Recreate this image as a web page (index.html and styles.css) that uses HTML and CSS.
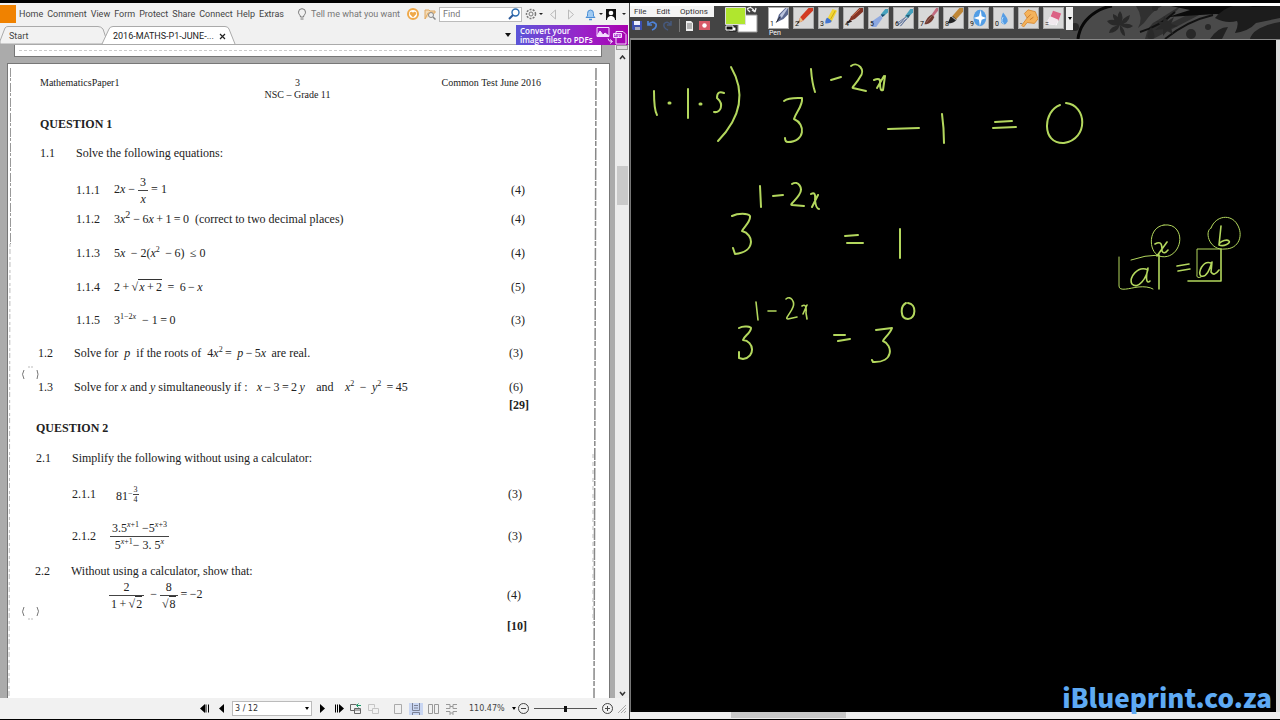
FILE: index.html
```
<!DOCTYPE html>
<html lang="en">
<head>
<meta charset="utf-8">
<title>Maths paper and whiteboard</title>
<link rel="stylesheet" href="styles.css">
</head>
<body>
<div class="screen">
  <section class="reader">
    <header class="reader-top">
      <div class="menu-row">
        <button class="file-btn" aria-label="File"></button>
        <nav class="menu">
          <button>Home</button><button>Comment</button><button>View</button><button>Form</button><button>Protect</button><button>Share</button><button>Connect</button><button>Help</button><button>Extras</button>
        </nav>
        <svg class="bulb" width="10" height="13" viewBox="0 0 10 13" fill="none" stroke="#777"><path d="M3.5 9C3.500 7 1.500 6.500 1.500 4.200A3.500 3.500 0 0 1 8.500 4.200C8.500 6.500 6.500 7 6.500 9ZM3.500 11h3"/></svg>
        <span class="tell">Tell me what you want</span>
        <svg class="heart" width="12" height="12" viewBox="0 0 12 12"><circle cx="6" cy="6" r="5" fill="#fff" stroke="#efa94a" stroke-width="2"/><path d="M6 9.500 3 6.300C2 4.500 4.500 2.800 6 4.700 7.500 2.800 10 4.500 9 6.300Z" fill="#efa94a"/></svg>
        <svg class="folder" width="12" height="12" viewBox="0 0 12 12"><path d="M1 11V2h4l1 1h5v2M1 11l3-6h7" fill="#f4dcb8" stroke="#e0a860"/><circle cx="7" cy="7" r="2.500" fill="#eee" stroke="#888"/><path d="m9 9 2.500 2.500" stroke="#888" stroke-width="1.500"/></svg>
        <div class="find"><input type="text" placeholder="Find" aria-label="Find"><svg width="12" height="12" viewBox="0 0 12 12"><circle cx="7.500" cy="4.500" r="3.500" fill="#fff" stroke="#2b6cb0" stroke-width="1.400"/><path d="M5 7 1 11" stroke="#2b5a9a" stroke-width="2"/></svg></div>
        <button class="ico gear" aria-label="Settings"><svg width="18" height="12" viewBox="0 0 18 12"><circle cx="6" cy="6" r="4.500" fill="none" stroke="#777" stroke-width="1.500" stroke-dasharray="2 1.200"/><circle cx="6" cy="6" r="2" fill="none" stroke="#777"/><path d="M14 5h4l-2 2z" fill="#222"/></svg></button>
        <button class="ico prev" aria-label="Back"><svg width="8" height="11" viewBox="0 0 8 11"><path d="M6.500 1v9l-5-4.500z" fill="none" stroke="#bbb"/></svg></button>
        <button class="ico fwd" aria-label="Forward"><svg width="8" height="11" viewBox="0 0 8 11"><path d="M1.500 1v9l5-4.500z" fill="none" stroke="#bbb"/></svg></button>
        <button class="ico bell" aria-label="Notifications"><svg width="18" height="13" viewBox="0 0 18 13"><path d="M1 9.500 2.500 8V5.500a3 3.500 0 0 1 6 0V8L10 9.500z" fill="#9fcaf2" stroke="#4a8fd6"/><path d="M4 11.500h3" stroke="#4a8fd6" stroke-width="1.500"/><path d="M14 5h4l-2 2z" fill="#222"/></svg></button>
        <button class="ico user" aria-label="Account"><svg width="20" height="11" viewBox="0 0 20 11"><path d="M0 0h10v11H0z" fill="#111"/><circle cx="5" cy="4" r="2.300" fill="#fff"/><path d="M1 11q0-3 3-4h2q3 1 3 4z" fill="#fff"/><path d="M16 4h4l-2 2z" fill="#222"/></svg></button>
      </div>
      <div class="tab-row">
        <svg class="tab-lines" viewBox="0 0 240 18" width="240" height="18" fill="#f2f2f2" stroke="#aaa"><path d="M0 15 5 2Q6 .5 8 .5H98Q101 .5 103 3L108 18H0z"/><path d="M102 18 109 3Q110 .5 113 .5H225Q228 .5 229 3L235 18" fill="#fff"/></svg>
        <button class="tab">Start</button>
        <button class="tab active">2016-MATHS-P1-JUNE-...</button>
        <button class="close" aria-label="Close tab"><svg width="7" height="7" viewBox="0 0 7 7"><path d="m1 1 5 5M6 1 1 6" stroke="#222" stroke-width="1.200"/></svg></button>
        <button class="ico more" aria-label="More tabs"><svg width="6" height="4" viewBox="0 0 6 4"><path d="M0 0h6L3 4z" fill="#111"/></svg></button>
        <a class="promo" href="#"><span>Convert your<br>image files to PDFs</span><svg width="32" height="20" viewBox="0 0 32 20" fill="none" stroke="#f3dcff"><path d="M1 2.500h12v9H1z"/><path d="m1 11 3-5 3 4 2-2 4 3z" fill="#f3dcff"/><path d="M22 6.500h5l3 3V19H20V6.500z"/><path d="M17.500 8.500h8v4h-8z" fill="#b23ad0"/><path d="M19 11V9.500h1v1M22 9.500v2h1v-2M25 12V9.500" stroke-width=".8"/><path d="M12 13.500q0 3 4 3m-2-2 2.500 2-2.500 2"/></svg></a>
      </div>
    </header>

    <div class="viewer">
      <div class="pages">
        <div class="sheet-prev"><i></i></div>
        <article class="sheet">
          <svg class="edge edge-l" width="4" height="634" viewBox="0 0 4 634" fill="none" stroke="#999"><path d="M2.500 4V180" stroke-dasharray="9 1 3 2"/><path d="M2 180 1 634" stroke="#bbb" stroke-dasharray="3 2 5 3"/></svg>
          <svg class="edge edge-r" width="6" height="634" viewBox="0 0 6 634" fill="none" stroke="#888"><path d="M4 4 2 634" stroke-width="1.500" stroke-dasharray="12 1 5 2"/><path d="M1 390V560" stroke="#bbb" stroke-dasharray="4 4"/></svg>
          <svg class="punch punch-a" width="20" height="16" viewBox="0 0 20 16" fill="none" stroke="#777"><path d="M3 4Q0 8 3 13M16 4q2 4 0 9"/><path d="M7 1h5" stroke="#bbb" stroke-dasharray="2 1"/></svg>
          <svg class="punch punch-b" width="20" height="16" viewBox="0 0 20 16" fill="none" stroke="#777"><path d="M3 3Q0 8 3 12M16 3q3 4 0 9"/><path d="M7 15h5" stroke="#bbb" stroke-dasharray="2 1"/></svg>
          <header class="paper-head"><span>MathematicsPaper1</span><span class="mid">3<br>NSC – Grade 11</span><span class="right">Common Test June 2016</span></header>

          <section class="part p1">
            <h2>QUESTION 1</h2>
            <div class="q h30"><b>1.1</b><span>Solve the following equations:</span></div>
            <div class="q sub h44"><b>1.1.1</b><span class="m">2<i>x</i> − <span class="frac"><span>3</span><span><i>x</i></span></span> = 1</span><em>(4)</em></div>
            <div class="q sub h14"><b>1.1.2</b><span class="m">3<i>x</i><sup class="big">2</sup> −&thinsp;6<i>x</i>&thinsp;+&thinsp;1&thinsp;=&thinsp;0 &nbsp;(correct to two decimal places)</span><em>(4)</em></div>
            <div class="q sub h54"><b>1.1.3</b><span class="m">5<i>x</i> &thinsp;− 2(<i>x</i><sup>2</sup>&thinsp; −&thinsp;6) &thinsp;≤ 0</span><em>(4)</em></div>
            <div class="q sub h14"><b>1.1.4</b><span class="m">2&thinsp;+&thinsp;<span class="root">√<span><i>x</i>&thinsp;+&thinsp;2</span></span>&thinsp; =&thinsp; 6&thinsp;−&thinsp;<i>x</i></span><em>(5)</em></div>
            <div class="q sub h52"><b>1.1.5</b><span class="m">3<sup>1−2<i>x</i></sup> &nbsp;− 1&thinsp;=&thinsp;0</span><em>(3)</em></div>
          </section>
          <section class="part p2">
            <div class="q h14"><b>1.2</b><span>Solve for &nbsp;<i>p</i> &nbsp;if the roots of &nbsp;4<i>x</i><sup>2</sup>&thinsp;=&thinsp; <i>p</i>&thinsp;−&thinsp;5<i>x</i>&thinsp; are real.</span><em>(3)</em></div>
            <div class="q h18 gap-above"><b>1.3</b><span>Solve for <i>x</i> and <i>y</i> simultaneously if : &nbsp; <i>x</i>&thinsp;−&thinsp;3&thinsp;=&thinsp;2&thinsp;<i>y</i> &nbsp;&thinsp; and &nbsp;&thinsp; <i>x</i><sup>2</sup>&thinsp; −&thinsp; <i>y</i><sup>2</sup>&thinsp; =&thinsp;45</span><em>(6)</em></div>
            <div class="q h18 total"><strong>[29]</strong></div>
          </section>
          <section class="part p3">
            <h2>QUESTION 2</h2>
            <div class="q h32"><b>2.1</b><span>Simplify the following without using a calculator:</span></div>
            <div class="q sub h40"><b>2.1.1</b><span class="m">&nbsp; 81<span class="pow">−<span class="frac tiny"><span>3</span><span>4</span></span></span></span><em>(3)</em></div>
            <div class="q sub h44"><b>2.1.2</b><span class="m"><span class="frac"><span>3.5<sup><i>x</i>+1</sup> −5<sup><i>x</i>+3</sup></span><span>5<sup><i>x</i>+1</sup>− 3. 5<sup><i>x</i></sup></span></span></span><em>(3)</em></div>
          </section>
          <section class="part p4">
            <div class="q h18"><b>2.2</b><span>Without using a calculator, show that:</span></div>
            <div class="q sub h30"><b></b><span class="m"><span class="frac"><span>2</span><span>1&thinsp;+&thinsp;<span class="root">√<span>2</span></span></span></span> &nbsp;− <span class="frac"><span>8</span><span><span class="root">√<span>8</span></span></span></span> =&thinsp;−2</span><em>(4)</em></div>
            <div class="q h32 total"><strong>[10]</strong></div>
          </section>
        </article>
      </div>
      <div class="vscroll"><i class="split"></i><svg width="7" height="5" viewBox="0 0 7 5"><path d="m1 4 2.500-3L6 4" fill="none" stroke="#333" stroke-width="1.500"/></svg><i class="thumb"></i><svg width="7" height="5" viewBox="0 0 7 5"><path d="m1 1 2.500 3L6 1" fill="none" stroke="#333" stroke-width="1.500"/></svg></div>
    </div>

    <footer class="status">
      <button aria-label="First page"><svg width="10" height="9" viewBox="0 0 10 9"><path d="M5 0v9L0 4.500zM5.500 .5h1v8h-1zM8 .5h1v8H8z"/></svg></button>
      <button class="s1" aria-label="Previous page"><svg width="6" height="9" viewBox="0 0 6 9"><path d="M5 0v9L0 4.500z"/></svg></button>
      <span class="page-box"><select aria-label="Page"><option>3 / 12</option></select><svg width="4" height="3" viewBox="0 0 4 3"><path d="M0 0h4L2 3z"/></svg></span>
      <button aria-label="Next page"><svg width="6" height="9" viewBox="0 0 6 9"><path d="M1 0v9l5-4.500z"/></svg></button>
      <button class="s1" aria-label="Last page"><svg width="10" height="9" viewBox="0 0 10 9"><path d="M1 .5h1v8H1zM3 .5h1v8H3zM5 0v9l5-4.500z"/></svg></button>
      <button class="view-back" aria-label="Previous view"><svg width="12" height="12" viewBox="0 0 12 12" fill="none" stroke="#666"><path d="M4 7.500H.5v-6h6M4.500 5.500h6v5h-6zM4.500 7h6"/><path d="M11 2.500H7m1.500-2-2 2 2 2" stroke="#1c9a6a"/></svg></button>
      <button aria-label="Next view"><svg width="12" height="12" viewBox="0 0 12 12" fill="none" stroke="#c4c4c4"><path d="M4 7.500H.5v-6h6v3M4.500 5.500h6v5h-6z"/></svg></button>
      <span class="views">
        <button aria-label="Single page"><svg width="14" height="12" viewBox="0 0 14 12" fill="none" stroke="#aaa"><path d="M3.500 1.500h7v9h-7z"/></svg></button>
        <button class="on" aria-label="Continuous"><svg width="14" height="12" viewBox="0 0 14 12" fill="none" stroke="#7b8194"><path d="M3.500 0v7.500h7V0M3.500 12V9.500h7V12M5 2.500h4M5 5h4"/></svg></button>
        <button aria-label="Facing"><svg width="14" height="12" viewBox="0 0 14 12" fill="none" stroke="#999"><path d="M1.500 1.500h4v9h-4zM7.500 1.500h4v9h-4z"/></svg></button>
        <button aria-label="Continuous facing"><svg width="14" height="12" viewBox="0 0 14 12" fill="none" stroke="#999"><path d="M1 1.500h4v4H1M12 1.500H8v4h4M1 8.500h4V12M12 8.500H8V12M5 3.500h3M5 10h3"/></svg></button>
      </span>
      <span class="zoom">110.47%</span>
      <svg width="4" height="3" viewBox="0 0 4 3"><path d="M0 0h4L2 3z"/></svg>
      <button class="s2" aria-label="Zoom out"><svg width="11" height="11" viewBox="0 0 11 11" fill="none" stroke="#444"><circle cx="5.500" cy="5.500" r="5"/><path d="M3 5.500h5"/></svg></button>
      <input type="range" aria-label="Zoom">
      <button aria-label="Zoom in"><svg width="11" height="11" viewBox="0 0 11 11" fill="none" stroke="#444"><circle cx="5.500" cy="5.500" r="5"/><path d="M3 5.500h5M5.500 3v5"/></svg></button>
      <svg class="grip" width="10" height="10" viewBox="0 0 10 10" stroke="#aaa"><path d="M1 9 9 1M4 9l5-5M7 9l2-2"/></svg>
    </footer>
  </section>

  <section class="board">
    <header class="board-top">
      <svg class="floral" viewBox="1060 6 220 33" width="220" height="33" fill="#292929">
        <path d="M1060 6h220v33h-220z" fill="#4a4a4a"/>
        <path d="M1078 39Q1080 22 1096 12 1104 7 1112 6" fill="none" stroke="#080808" stroke-width="3"/>
        <path d="M1120 25q-5-8 0-14 5 6 0 14 3-8 10-10-1 8-10 10 8-3 13 1-6 5-13-1 5 4 5 11-6-2-5-11-3 8-11 8 1-7 11-8-9 2-13-4 8-4 13 4-8-5-7-11 7 2 7 11"/>
        <path d="M1136 6q8 12 2 22l6-5q8-12 18-17h18l-22 14q-10 4-13 19h8l48-25-8-2-34 17 22-23z" fill="#303030"/>
        <path d="M1165 39q22-18 48-24M1140 32q20-6 35-20" fill="none" stroke="#111" stroke-width="2"/>
        <path d="m1164 16 4 5 6-4-3 7 7 2-7 2 2 6-6-3-4 5v-7l-8 1 6-5-5-4 7 1z"/>
        <path d="M1171 6h109v8q-38 3-64 0l-48 3 22-7z" fill="#0b0b0b"/>
        <path d="M1215 18q15-18 38-11l27-1v12l-24 5q-7 8-21 10 4-8 2-12-11 3-22-3" fill="#1c1c1c"/>
        <path d="M1250 39q3-12 30-17v17zM1210 39q8-12 18-12l-6 12" fill="#222"/>
        <circle cx="1191" cy="34" r="5"/><circle cx="1208" cy="27" r="3"/><circle cx="1075" cy="27" r="4"/><circle cx="1155" cy="8" r="3"/><path d="M1151 27q7 12 0 12t0-12"/>
      </svg>
      <div class="board-left">
        <nav class="board-menu"><button>File</button><button>Edit</button><button>Options</button></nav>
        <div class="quick">
          <button aria-label="Save"><svg width="11" height="11" viewBox="0 0 11 11"><path d="M0 1h10v9H1L0 9z" fill="#3d4fae"/><path d="M2 1h6v4H2z" fill="#eef"/><path d="M3 7h5v3H3z" fill="#aab"/></svg></button>
          <button aria-label="Undo"><svg width="11" height="11" viewBox="0 0 11 11" fill="none" stroke="#4f83d8" stroke-width="1.700"><path d="M1 5q4-5 8-1 1 4-4 6M1 1v4h4"/></svg></button>
          <button aria-label="Redo"><svg width="11" height="11" viewBox="0 0 11 11" fill="none" stroke="#46597e" stroke-width="1.500"><path d="M9 5Q5 0 2 4q-1 4 4 6M9 1v4H5"/></svg></button>
          <i></i>
          <button aria-label="New page"><svg width="11" height="11" viewBox="0 0 11 11"><path d="M2 1h5l2 2v8H2z" fill="#eee"/><path d="M3 4h5M3 6h5M3 8h5" stroke="#777"/></svg></button>
          <button class="rec" aria-label="Record"><svg width="11" height="9" viewBox="0 0 11 9"><path d="M0 0h11v9H0z" fill="#d85a68"/><circle cx="5.500" cy="4.500" r="2.200" fill="#fff"/></svg></button>
        </div>
      </div>
      <button class="colours" aria-label="Colours"><svg width="33" height="27" viewBox="0 0 33 27"><path d="M13 9h19v17H13z" fill="#fff" stroke="#999"/><path d="M.5 1.500h20v17H.5z" fill="#b0e62e" stroke="#ddd"/><path d="M22 3q4-4 8 3M22 3l4-2M22 3l3 3M30 6l-3-2M30 6l1-4" fill="none" stroke="#eee" stroke-width="1.300"/><path d="M4 21h7v4H4z" fill="#fff" stroke="#111"/><path d="M1 20h7v4H1z" fill="#111" stroke="#fff"/></svg></button>
      <div class="tools">
        <button class="tool sel"><svg viewBox="0 0 21 22"><path d="M8 16 11 7 18 0h3v7l-5 5z" fill="#5b6890"/><path d="M12 8l7-8h2l-7 11z" fill="#bcc5df"/><path d="m8 16 4-6" stroke="#222"/></svg><span>1</span><small>Pen</small></button>
        <button class="tool"><svg viewBox="0 0 21 22"><path d="m4 17 3-7 9-10h5v3L10 14z" fill="#d23a22"/><path d="m4 17 3-7 3 4z" fill="#e9bd84"/><path d="m4 17 2-3" stroke="#111"/></svg><span>2</span></button>
        <button class="tool"><svg viewBox="0 0 21 22"><path d="m9 12 6-11 5 2-6 12z" fill="#f2d636"/><path d="M7 15q1-5 3-4l4 3q0 3-7 3z" fill="#4476d1"/><path d="m13 12 5-9" stroke="#c7a20e"/></svg><span>3</span></button>
        <button class="tool"><svg viewBox="0 0 21 22"><path d="m5 15 3-6 9-9h4v4l-9 8z" fill="#843325"/><path d="m9 9 9-8" stroke="#d07956"/><path d="m2 18 4-5 3 2z" fill="#30211e"/></svg><span>4</span></button>
        <button class="tool"><svg viewBox="0 0 21 22"><path d="m3 15 10-7 2 3-7 10H3z" fill="#8ea9e1"/><path d="m13 7 5-6h3v4l-6 5z" fill="#45a1bd"/><path d="m13 7 2 3 3-3z" fill="#194a70"/></svg><span>5</span></button>
        <button class="tool"><svg viewBox="0 0 21 22"><path d="m3 17 10-7-9 9 10-7-7 8 8-9" fill="none" stroke="#687ba1"/><path d="m12 9 6-8h3v4l-6 6z" fill="#45a1bd"/><path d="m13 8 3 3 2-4z" fill="#285e77"/></svg><span>6</span></button>
        <button class="tool"><svg viewBox="0 0 21 22"><path d="m14 7 5-7h2v3l-5 6z" fill="#c36b7f"/><path d="M6 18q2-8 8-11l3 3q-3 7-9 8z" fill="#713a30"/><path d="m8 16 6-7" stroke="#a57267"/></svg><span>7</span></button>
        <button class="tool"><svg viewBox="0 0 21 22"><path d="m9 9 8-9h4v4l-8 9z" fill="#bf8737"/><path d="m4 17 3-7 3-1 4 4q-3 4-10 4" fill="#242424"/><path d="m8 9 5 4" stroke="#ddd"/></svg><span>8</span></button>
        <button class="tool"><svg viewBox="0 0 21 22"><ellipse cx="12" cy="11" rx="7" ry="9" fill="#529de5"/><path d="m13 2 1 7 5 2-5 2-2 7-1-7-6-2 6-2z" fill="#fff"/></svg><span>9</span></button>
        <button class="tool"><svg viewBox="0 0 21 22"><path d="M10 5q6 7 5 10-3 6-7 1-1-4 2-11" fill="#559de5"/><path d="M10 10q-3 6 1 7" fill="none" stroke="#c7e5ff"/></svg><span>0</span></button>
        <button class="tool"><svg viewBox="0 0 21 22"><path d="m3 19 6-8-3-5 4-4 8 2 3 8-4 5-8-1-4 5z" fill="#f5b35c" stroke="#d88c35"/><path d="m9 11 4-4m-1 6 4-3" stroke="#c97828"/></svg><span>-</span></button>
        <button class="tool"><svg viewBox="0 0 21 22"><path d="m4 14 6-10 9 2-5 13-9-1z" fill="#fff"/><path d="m7 10 9 4 3-8-9-3z" fill="#db6285"/><path d="m4 14 3-5 9 4-3 6-8-2z" fill="#f1e9ee"/></svg><span>=</span></button>
        <button class="tool-more" aria-label="More tools"><svg width="4" height="3" viewBox="0 0 4 3"><path d="M0 0h4L2 3z"/></svg></button>
      </div>
    </header>
    <div class="canvas">
      <svg class="ink" viewBox="632 40 644 672" preserveAspectRatio="xMinYMin meet" role="img" aria-label="1.1.5) 3^(1-2x) - 1 = 0; 3^(1-2x) = 1; 3^(1-2x) = 3^0; a^x = a^b">
        <g class="dots"><path d="M669 103h1M700 104h1"/></g>
        <g class="stroke">
          <path d="M654 91Q654 110 657 115M688 89V118M724 93Q717 90 717 98C725 105 720 113 714 112M731 67Q753 105 718 141"/>
          <path d="M784 101C789 97 800 98 802 98C803 106 796 112 794 119C806 124 805 142 788 142Q785 142 785 138M811 69Q812 83 815 92M831 80 841 77M851 66C858 61 866 70 860 77C857 83 851 88 853 88L866 91M874 80Q881 77 880 83Q880 92 883 90L885 76M884 76 877 88"/>
          <path d="M888 129 919 128M942 114Q944 128 944 143M995 122 1012 121M993 128 1016 127M1060 105C1043 111 1041 144 1064 143C1089 139 1087 105 1066 103"/>
          <path d="M760 186 761 207M773 196 783 195M792 184C798 180 804 188 799 195C796 200 789 205 792 205L804 206M811 194Q816 191 815 200Q816 209 819 209M818 195 812 207"/>
          <path d="M732 216C738 213 748 213 750 216C751 222 743 228 742 231C754 234 756 252 735 254L733 248M845 236 858 235M847 243 863 243M900 229V258"/>
          <path d="M739 328C744 325 751 327 751 328C751 333 744 336 743 340C754 341 756 357 743 359L739 358V352M834 335 845 335M838 341 850 339M876 330 892 328C890 334 884 338 883 341C893 345 894 363 873 362L872 360M906 303C900 306 900 319 908 319C916 319 917 304 908 303"/>
        </g>
        <g class="thin">
          <path d="M756 302 758 320M768 311 776 311M786 299C791 295 795 302 793 307C791 313 784 319 788 319L797 317M802 306Q807 303 806 313L807 319M807 305 803 314"/>
          <path d="M1148 270C1138 265 1128 278 1132 284C1138 290 1147 278 1148 268C1145 280 1147 284 1150 281M1155 244C1162 240 1162 246 1162 251Q1164 255 1168 250M1167 242 1157 256M1177 266 1189 264M1178 271 1190 269M1159 255V289M1188 281 1221 281V249"/>
          <path d="M1221 226 1219 245C1224 247 1231 243 1229 241C1227 239 1221 241 1220 243M1211 263C1203 260 1197 273 1201 276C1207 278 1210 268 1212 262L1211 272Q1214 277 1219 270"/>
        </g>
        <g class="fine">
          <path d="M1119 257V286C1119 292 1130 288 1138 287Q1148 286 1153 289M1131 260Q1145 255 1159 255M1220 249H1197V274Q1196 279 1201 277"/>
          <path d="M1164 225C1148 227 1148 251 1159 256C1175 261 1185 241 1177 230Q1173 224 1164 225M1211 228C1216 215 1231 214 1237 224C1244 235 1239 249 1225 249C1209 251 1204 231 1211 228"/>
        </g>
      </svg>
      <i class="canvas-vscroll"></i>
    </div>
    <div class="canvas-hscroll"><i></i></div>
  </section>
  <div class="mark">iBlueprint.co.za</div>
</div>
</body>
</html>
```
FILE: styles.css
```
* { box-sizing: border-box; }
body { margin: 0; background: #000; font-family: Roboto, "Liberation Sans", sans-serif; font-size: 9px; color: #444; }
button { border: 0; padding: 0; margin: 0; background: none; font: inherit; color: inherit; display: flex; align-items: center; }
svg { display: block; flex: none; }
.screen { position: relative; min-height: 100vh; display: grid; grid-template-columns: 63fr 65fr; padding: 3px 0 1px; }

/* PDF reader */
.reader { display: flex; flex-direction: column; background: #f1f1f1; border-right: 1px solid #444; min-width: 0; }
.menu-row { display: flex; align-items: center; height: 22px; }
.file-btn { width: 16px; height: 18px; background: #f08200; flex: none; }
.menu { display: flex; gap: 4px; margin-left: 3px; }
.bulb { margin-left: 13px; }
.tell { margin-left: 4px; color: #777; white-space: nowrap; flex: 1; }
.heart { margin-right: 5px; }
.folder { margin-right: 3px; }
.find { display: flex; align-items: center; width: 83px; height: 15px; background: #fff; border: 1px solid #bbb; padding-right: 1px; }
.find input { border: 0; outline: 0; background: none; min-width: 0; flex: 1; font: inherit; padding: 0 3px; }
.find input::placeholder { color: #777; }
.gear { margin-left: 3px; }
.prev { margin-left: 6px; }
.fwd { margin-left: 10px; }
.bell { margin-left: 10px; }
.user { margin-left: 3px; margin-right: 3px; }
.tab-row { position: relative; display: flex; align-items: center; height: 20px; border-bottom: 1px solid #aaa; }
.tab-lines { position: absolute; left: 0; bottom: 0; }
.tab { position: relative; height: 16px; margin: 3px 0 0 9px; width: 95px; flex: none; white-space: nowrap; }
.tab.active { color: #222; }
.close { position: relative; margin: 3px auto 0 11px; }
.more { margin-right: 5px; }
.promo { display: flex; align-items: center; width: 112px; height: 20px; margin-right: 1px; padding-left: 4px; background: linear-gradient(90deg, #5b55d8, #9a22c8 60%, #a800ae); color: #fff; text-decoration: none; font: 600 8px/9px "Open Sans", sans-serif; white-space: nowrap; }
.promo span { flex: 1; }
.promo svg { margin-left: -8px; }
.viewer { flex: 1; display: flex; background: #ababab; min-height: 0; }
.pages { flex: 1; min-width: 0; display: flex; flex-direction: column; padding: 0 5px 0 7px; }
.sheet-prev { height: 12px; background: #fff; margin: 0 8px 6px 7px; border: 1px solid #777; border-top: 0; padding: 5px 4px 0; }
.sheet-prev i { display: block; border-top: 1px dashed #ccc; }
.sheet { position: relative; flex: 1; background: #fff; border: 1px solid #777; border-bottom: 0; padding-top: 13px; font: 12px/14px "Liberation Serif", serif; color: #222; }
.edge { position: absolute; top: 0; }
.edge-l { left: 0; }
.edge-r { right: 11px; }
.punch { position: absolute; left: 13px; }
.punch-a { top: 302px; }
.punch-b { top: 540px; }
.paper-head { display: grid; grid-template-columns: 1fr 1fr 1fr; padding: 0 68px 0 32px; font-size: 10px; line-height: 12px; margin-bottom: 9px; }
.paper-head .mid { text-align: center; padding-left: 14px; }
.paper-head .right { text-align: right; }
.part { padding-right: 84px; }
.p1 { padding-left: 32px; }
.p2 { padding-left: 30px; padding-right: 86px; }
.p3 { padding-left: 28px; padding-right: 87px; }
.p4 { padding-left: 27px; padding-right: 88px; padding-top: 4px; }
.sheet h2 { margin: 0; font-size: 12px; line-height: 28px; }
.q { display: flex; align-items: center; white-space: nowrap; }
.q b { font-weight: normal; width: 36px; flex: none; }
.q em { font-style: normal; margin-left: auto; }
.q.sub { padding-left: 36px; }
.q.sub b { width: 38px; }
.total { justify-content: flex-end; }
.p2 .total, .p4 .total { margin-right: -6px; }
.h14 { height: 14px; }
.h18 { height: 18px; }
.h30 { height: 30px; }
.h32 { height: 32px; }
.h40 { height: 40px; }
.h44 { height: 44px; }
.h52 { height: 52px; }
.h54 { height: 54px; }
.gap-above { margin-top: 18px; }
sup { font-size: 8px; line-height: 0; vertical-align: 5px; }
sup.big { font-size: 10px; }
.frac { display: inline-flex; flex-direction: column; vertical-align: middle; text-align: center; line-height: 16px; }
.frac > span + span { border-top: 1px solid #444; }
.frac > span { padding: 0 2px; }
.frac.tiny { font-size: 8px; line-height: 9px; }
.frac.tiny > span { padding: 0 1px; }
.pow { font-size: 8px; line-height: 9px; vertical-align: 4px; }
.root > span { border-top: 1px solid #333; padding-left: 1px; }
.vscroll { width: 14px; display: flex; flex-direction: column; align-items: center; background: #ececec; padding-bottom: 2px; }
.vscroll .split { width: 12px; height: 5px; border: 1px solid #999; background: #ddd; margin-bottom: 5px; }
.vscroll .thumb { width: 11px; height: 39px; margin-top: 106px; margin-bottom: auto; background: #c9c9c9; }
.status { display: flex; align-items: center; height: 21px; padding-left: 200px; }
.status .s1 { margin-left: 9px; }
.page-box { display: flex; align-items: center; width: 80px; height: 15px; margin: 0 7px; background: #fff; border: 1px solid #bbb; padding-right: 2px; }
.page-box select { appearance: none; border: 0; background: none; flex: 1; min-width: 0; font: 8px "DejaVu Sans", sans-serif; color: #333; padding: 0 2px; }
.status .view-back { margin: 0 6px 0 6px; }
.views { display: flex; gap: 4px; margin-left: 11px; }
.views .on { background: #c9d6f2; }
.zoom { font: 8px "DejaVu Sans", sans-serif; margin: 0 auto 0 10px; }
.status .s2 { margin-left: 2px; }
.status input { appearance: none; width: 63px; height: 11px; margin: 0 5px; background: linear-gradient(#555, #555) center / 100% 1px no-repeat; }
.status input::-webkit-slider-thumb { appearance: none; width: 3px; height: 6px; background: #111; }
.grip { margin: 0 2px 0 4px; }

/* Whiteboard */
.board { display: flex; flex-direction: column; min-width: 0; background: #000; }
.board-top { position: relative; display: flex; height: 37px; border-top: 3px solid #fff; border-bottom: 2px solid #888; background: #444; }
.floral { position: absolute; right: 0; top: 0; }
.board-left { width: 84px; flex: none; }
.board-menu { display: flex; gap: 10px; height: 11px; padding-left: 4px; background: #f4f4f4; font-size: 8px; color: #333; }
.quick { display: flex; align-items: center; gap: 4px; padding: 2px 0 0 2px; }
.quick i { width: 1px; height: 13px; background: #777; margin-left: 2px; }
.colours { align-self: flex-start; margin: 0 10px 0 11px; }
.tools { position: relative; display: flex; gap: 4px; padding-top: 1px; }
.tool { position: relative; width: 21px; height: 22px; background: #d8d8d8; border: 1px solid #aaa; }
.tool.sel { background: #fff; }
.tool svg { width: 19px; height: 20px; }
.tool span { position: absolute; left: 1px; bottom: 0; font-size: 7px; line-height: 8px; color: #111; }
.tool small { position: absolute; left: 0; top: 21px; color: #fff; font-size: 7px; line-height: 9px; }
.tool-more { width: 7px; height: 23px; justify-content: center; background: #eee; margin-left: -2px; }
.canvas { flex: 1; display: flex; min-height: 0; padding-left: 1px; border-left: 1px solid #777; }
.ink { flex: 1; min-width: 0; height: 100%; fill: none; stroke: #b3d75d; stroke-linecap: round; stroke-linejoin: round; }
.dots { stroke-width: 3; }
.stroke { stroke-width: 2; }
.thin { stroke-width: 1.6; }
.fine { stroke-width: 1; }
.canvas-vscroll { width: 4px; background: #ddd; }
.canvas-hscroll { height: 7px; background: #eee; padding-left: 101px; }
.canvas-hscroll i { display: block; width: 115px; height: 6px; background: #c8c8c8; }
.mark { position: absolute; right: 8px; bottom: 5px; font: 900 26px/36px "Noto Sans CJK SC", sans-serif; color: #5eaaf4; }
```
